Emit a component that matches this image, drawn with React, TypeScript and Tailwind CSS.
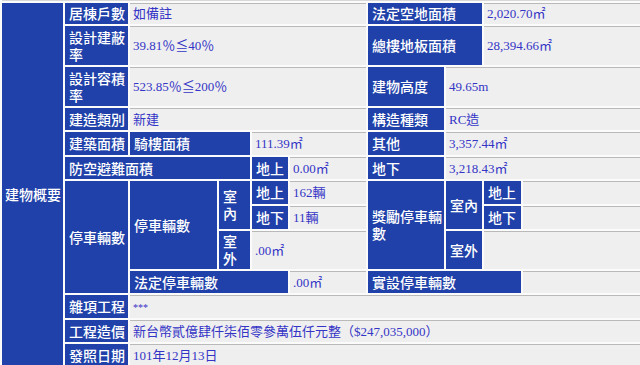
import type { ReactNode } from "react";

function Label({ className = "", children }: { className?: string; children: ReactNode }) {
  return (
    <div
      className={`flex items-center bg-[#1f41a9] pl-[4px] text-[14px] leading-[17px] font-medium text-white ${className}`}
    >
      <span>{children}</span>
    </div>
  );
}

function Value({ className = "", children }: { className?: string; children?: ReactNode }) {
  return (
    <div
      className={`flex items-center border-t border-[#b9b9b9] bg-[#efefef] px-[3px] font-['Liberation_Serif','Noto_Sans_CJK_TC',serif] text-[13px] leading-[16px] text-[#3434c6] ${className}`}
    >
      <span>{children}</span>
    </div>
  );
}

export default function App() {
  return (
    <div className="h-[365px] w-[640px] overflow-hidden bg-white font-['Noto_Sans_CJK_TC','Noto_Sans',sans-serif]">
      <div className="grid grid-cols-[61px_63px_87px_31px_36px_76px_76px_36px_37px_1fr] grid-rows-[1px_21px_39px_39px_22px_23px_22px_23px_23px_38px_22px_23px_22px_22px] gap-[2px] bg-[#fbfbfb] pl-[2px]">
        {/* bottom edge of the previous section */}
        <div className="col-span-10 col-start-1 row-start-1 bg-[#d8d8d8]" />

        <div className="col-start-1 row-span-13 row-start-2 bg-[#1f41a9] pl-[3px] pt-[183px] text-[14px] leading-[17px] font-medium whitespace-nowrap text-white">
          建物概要
        </div>

        {/* 居棟戶數 */}
        <Label className="col-start-2 row-start-2">居棟戶數</Label>
        <Value className="col-span-4 col-start-3 row-start-2">如備註</Value>
        <Label className="col-span-2 col-start-7 row-start-2">法定空地面積</Label>
        <Value className="col-span-2 col-start-9 row-start-2">2,020.70㎡</Value>

        {/* 建蔽率 */}
        <Label className="col-start-2 row-start-3">設計建蔽率</Label>
        <Value className="col-span-4 col-start-3 row-start-3">39.81％≦40％</Value>
        <Label className="col-span-2 col-start-7 row-start-3">總樓地板面積</Label>
        <Value className="col-span-2 col-start-9 row-start-3">28,394.66㎡</Value>

        {/* 容積率 */}
        <Label className="col-start-2 row-start-4">設計容積率</Label>
        <Value className="col-span-4 col-start-3 row-start-4">523.85％≦200％</Value>
        <Label className="col-start-7 row-start-4">建物高度</Label>
        <Value className="col-span-3 col-start-8 row-start-4">49.65m</Value>

        {/* 類別 */}
        <Label className="col-start-2 row-start-5">建造類別</Label>
        <Value className="col-span-4 col-start-3 row-start-5">新建</Value>
        <Label className="col-start-7 row-start-5">構造種類</Label>
        <Value className="col-span-3 col-start-8 row-start-5">RC造</Value>

        {/* 建築面積 */}
        <Label className="col-start-2 row-start-6">建築面積</Label>
        <Label className="col-span-2 col-start-3 row-start-6">騎樓面積</Label>
        <Value className="col-span-2 col-start-5 row-start-6">111.39㎡</Value>
        <Label className="col-start-7 row-start-6">其他</Label>
        <Value className="col-span-3 col-start-8 row-start-6">3,357.44㎡</Value>

        {/* 防空避難 */}
        <Label className="col-span-3 col-start-2 row-start-7">防空避難面積</Label>
        <Label className="col-start-5 row-start-7">地上</Label>
        <Value className="col-start-6 row-start-7">0.00㎡</Value>
        <Label className="col-start-7 row-start-7">地下</Label>
        <Value className="col-span-3 col-start-8 row-start-7">3,218.43㎡</Value>

        {/* 停車 */}
        <Label className="col-start-2 row-span-4 row-start-8">停車輛數</Label>
        <Label className="col-start-3 row-span-3 row-start-8">停車輛數</Label>
        <Label className="col-start-4 row-span-2 row-start-8">室內</Label>
        <Label className="col-start-5 row-start-8">地上</Label>
        <Value className="col-start-6 row-start-8">162輛</Value>
        <Label className="col-start-5 row-start-9">地下</Label>
        <Value className="col-start-6 row-start-9">11輛</Value>
        <Label className="col-start-4 row-start-10">室外</Label>
        <Value className="col-span-2 col-start-5 row-start-10">.00㎡</Value>
        <Label className="col-span-3 col-start-3 row-start-11">法定停車輛數</Label>
        <Value className="col-start-6 row-start-11">.00㎡</Value>

        <Label className="col-start-7 row-span-3 row-start-8">獎勵停車輛數</Label>
        <Label className="col-start-8 row-span-2 row-start-8">室內</Label>
        <Label className="col-start-9 row-start-8">地上</Label>
        <Value className="col-start-10 row-start-8" />
        <Label className="col-start-9 row-start-9">地下</Label>
        <Value className="col-start-10 row-start-9" />
        <Label className="col-start-8 row-start-10">室外</Label>
        <Value className="col-span-2 col-start-9 row-start-10" />
        <Label className="col-span-3 col-start-7 row-start-11">實設停車輛數</Label>
        <Value className="col-start-10 row-start-11" />

        {/* 其餘 */}
        <Label className="col-start-2 row-start-12">雜項工程</Label>
        <Value className="col-span-8 col-start-3 row-start-12">
          <span className="text-[10px]">***</span>
        </Value>
        <Label className="col-start-2 row-start-13">工程造價</Label>
        <Value className="col-span-8 col-start-3 row-start-13">新台幣貳億肆仟柒佰零參萬伍仟元整（$247,035,000）</Value>
        <Label className="col-start-2 row-start-14">發照日期</Label>
        <Value className="col-span-8 col-start-3 row-start-14">101年12月13日</Value>
      </div>
    </div>
  );
}
